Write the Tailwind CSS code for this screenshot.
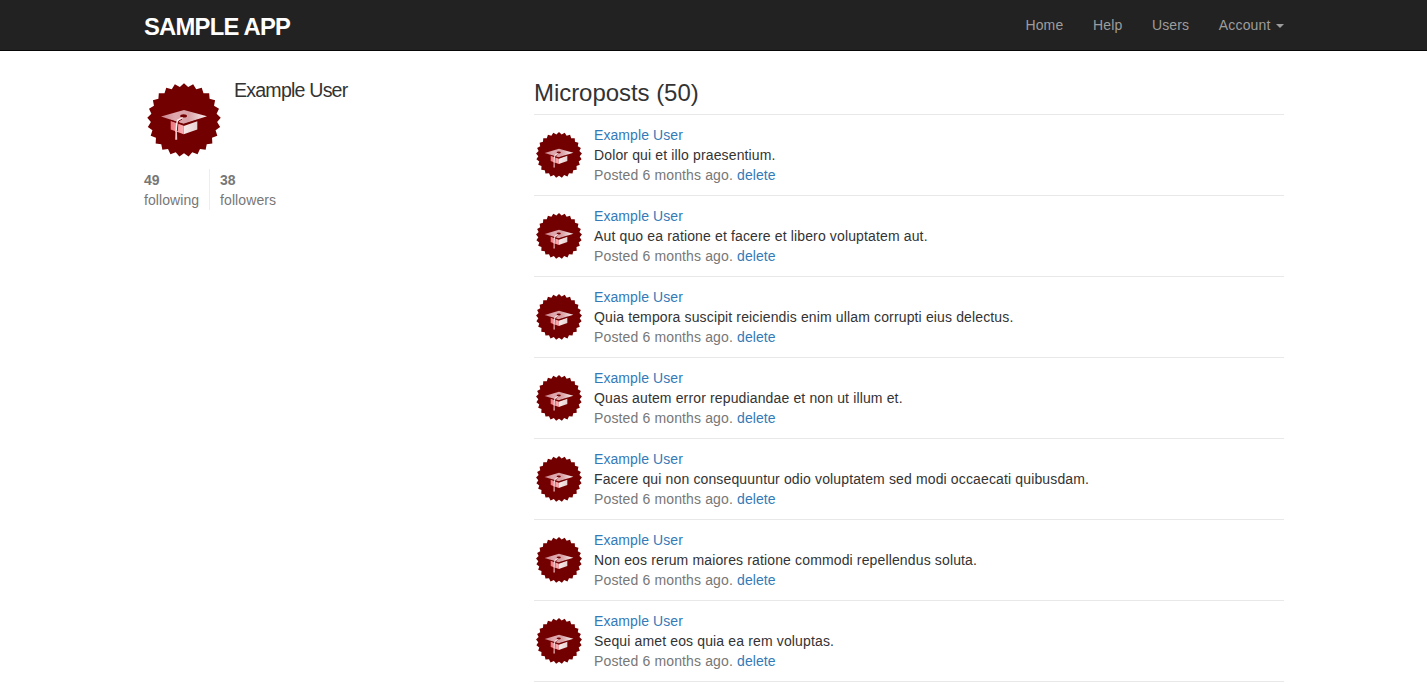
<!DOCTYPE html>
<html lang="en">
<head>
<meta charset="utf-8">
<title>Example User | Sample App</title>
<script src="https://cdn.jsdelivr.net/npm/@tailwindcss/browser@4"></script>
</head>
<body class="bg-white font-['Liberation_Sans',Arial,sans-serif] text-sm leading-5 text-[#333]">
<svg class="absolute size-0">
  <defs>
    <linearGradient id="board" x1="0" y1="0" x2="1" y2="0"><stop offset="0" stop-color="#c9808a"/><stop offset=".3" stop-color="#dfa9af"/><stop offset=".6" stop-color="#d8a0a5"/><stop offset="1" stop-color="#fbf3f3"/></linearGradient>
    <linearGradient id="side" x1="0" y1="0" x2="1" y2="0"><stop offset="0" stop-color="#e87880"/><stop offset="1" stop-color="#ffb0b5"/></linearGradient>
    <linearGradient id="front" x1="0" y1="0" x2="1" y2="0"><stop offset="0" stop-color="#f8eaea"/><stop offset="1" stop-color="#e8d3d3"/></linearGradient>
    <symbol id="badge" viewBox="0 0 80 80">
      <polygon id="seal" fill="#730000"/>
      <path fill="url(#side)" d="M26.7 41 39.7 45.8V54.3L26.7 49.5Z"/>
      <path fill="url(#front)" d="M39.7 46 53.3 41.3V49.5L39.7 54.3Z"/>
      <path fill="url(#board)" d="M17 36.6 40 30 63 36.3 39.5 43.7Z"/>
      <path fill="none" stroke="#730000" stroke-width=".7" d="M26.5 40.2 39.6 44.6 53.5 40"/>
      <ellipse cx="39.6" cy="35.9" rx="3.4" ry="1.6" fill="#730000"/>
      <path fill="none" stroke="#730000" stroke-width=".9" d="M38 39.1 34.7 41Q33.4 44 33.3 51"/>
      <path fill="none" stroke="#fff0f0" stroke-width="1.4" d="M38.6 37.5 33.6 40.2Q32.3 44 32.2 52"/>
      <path fill="#f4c4c8" d="M31.5 50H32.9L33.2 59.8H31.2Z"/>
    </symbol>
  </defs>
</svg>
<header class="h-[51px] border-b border-[#080808] bg-[#222]">
  <div class="ml-36 flex w-[1140px] justify-between">
    <a class="pt-[17px] text-[23.8px] leading-5 font-bold tracking-[-0.77px] text-white">SAMPLE APP</a>
    <nav class="flex gap-[29.6px] pt-[15px] tracking-[0.15px] text-[#9d9d9d]">
      <a>Home</a><a>Help</a><a>Users</a>
      <a class="flex h-5">Account <span class="mt-[9px] ml-[5.5px] h-1 border-x-4 border-t-4 border-x-transparent border-t-[#9d9d9d]"></span></a>
    </nav>
  </div>
</header>
<main class="ml-36 flex w-[1140px] pt-[29px]">
  <aside class="w-[390px]">
    <section class="flex gap-2.5">
      <svg class="size-20"><use href="#badge"/></svg>
      <h1 class="text-[19.6px] leading-5 tracking-[-0.8px]">Example User</h1>
    </section>
    <section class="mt-[9px] flex text-[#777]">
      <a class="w-[66px] border-r border-[#eee]"><strong class="block pt-px">49</strong><span class="block h-[19px] tracking-[0.07px]">following</span></a>
      <a class="pl-2.5"><strong class="block pt-px">38</strong><span class="tracking-[0.1px]">followers</span></a>
    </section>
  </aside>
  <section class="w-[750px]">
    <h3 class="h-[34px] text-2xl leading-[26px] tracking-[-0.05px]">Microposts (50)</h3>
    <ol id="posts" class="border-b border-[#e8e8e8]"></ol>
  </section>
</main>
<template id="post">
  <li class="flex gap-2.5 border-t border-[#e8e8e8] py-2.5">
    <svg class="mt-[5px] size-[50px]"><use href="#badge"/></svg>
    <div>
      <a class="block tracking-[0.08px] text-[#337ab7]">Example User</a>
      <p data-text class="tracking-[0.14px]"></p>
      <p class="tracking-[0.14px] text-[#777]">Posted 6 months ago. <a class="tracking-[0.07px] text-[#337ab7]">delete</a></p>
    </div>
  </li>
</template>
<script>
// Seal outline: 25 teeth around the centre
document.getElementById('seal').setAttribute('points', Array.from({length: 50}, (_, i) => {
  const a = i * Math.PI / 25, r = i % 2 ? 33.2 : 36.8;
  return (40 + r * Math.sin(a)).toFixed(2) + ',' + (40 - r * Math.cos(a)).toFixed(2);
}).join(' '));
[
  'Dolor qui et illo praesentium.',
  'Aut quo ea ratione et facere et libero voluptatem aut.',
  'Quia tempora suscipit reiciendis enim ullam corrupti eius delectus.',
  'Quas autem error repudiandae et non ut illum et.',
  'Facere qui non consequuntur odio voluptatem sed modi occaecati quibusdam.',
  'Non eos rerum maiores ratione commodi repellendus soluta.',
  'Sequi amet eos quia ea rem voluptas.'
].forEach(text => {
  const node = document.getElementById('post').content.cloneNode(true);
  node.querySelector('[data-text]').textContent = text;
  document.getElementById('posts').append(node);
});
</script>
</body>
</html>
